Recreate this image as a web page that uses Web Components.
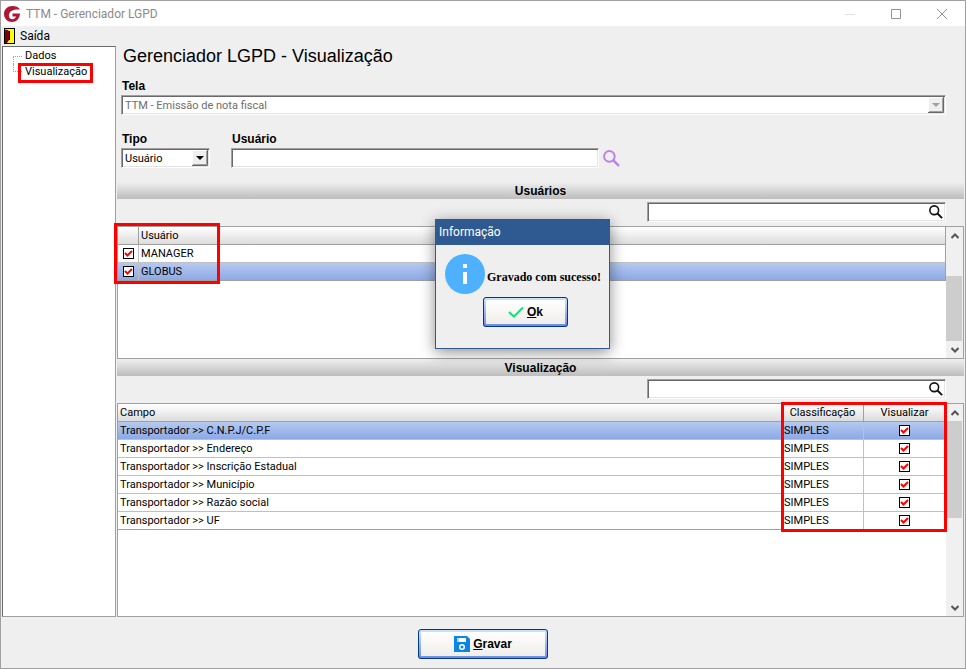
<!DOCTYPE html>
<html lang="pt-BR">
<head>
<meta charset="utf-8">
<title>TTM - Gerenciador LGPD</title>
<style>
body {
  margin: 0;
  font-family: Roboto, "Liberation Sans", sans-serif;
  font-size: 11px;
  color: #000;
  --face: #efefef;
  --line: #a0a0a0;
  --ui-font: Roboto, "Open Sans", sans-serif;
  --bold-font: "Liberation Sans", Arial, sans-serif;
}
</style>
</head>
<body>
<app-window heading="TTM - Gerenciador LGPD">
  <nav-tree slot="side"></nav-tree>
  <lgpd-form></lgpd-form>
  <section-bar>Usuários</section-bar>
  <search-row label="Pesquisar usuários"></search-row>
  <users-grid></users-grid>
  <section-bar>Visualização</section-bar>
  <search-row label="Pesquisar campos"></search-row>
  <fields-grid></fields-grid>
  <xp-button slot="footer" class="save">
    <svg slot="icon" width="16" height="16" viewBox="0 0 16 16"><path d="M0 0h13l3 3v13H0z" fill="#0c86e4"/><path d="M3 2h9v4H3z" fill="#fff"/><path d="M3 2h2v4H3z" fill="#a9d6f8"/><circle cx="8" cy="11" r="2.3" fill="none" stroke="#fff" stroke-width="1.5"/></svg>
    <u>G</u>ravar
  </xp-button>
  <message-dialog slot="dialog" heading="Informação">Gravado com sucesso!</message-dialog>
</app-window>

<script>
const glass = (color, size) => `
  <svg width="${size}" height="${size}" viewBox="0 0 16 16" fill="none" stroke="${color}">
    <circle cx="6" cy="6" r="5" stroke-width="1.8"/><path d="M9.7 9.7 15 15" stroke-width="2.2"/>
  </svg>`

// sunken boxes shared by the form and the search rows
const fieldStyle = `
  input, select {
    box-sizing: border-box;
    width: 100%;
    height: 20px;
    margin: 0;
    padding: 0 3px;
    font: inherit;
    color: inherit;
    background: #fff;
    border: 1px solid;
    border-color: #a0a0a0 #fff #fff #a0a0a0;
    border-radius: 0;
    box-shadow: inset 1px 1px #696969, inset -1px -1px #e3e3e3;
    outline: none;
    appearance: none;
  }
`

const gridStyle = `
  :host {
    display: flex;
    position: relative;
    box-sizing: border-box;
    background: #fff;
    border: 1px solid var(--line);
  }
  .sheet {
    flex: 1;
    min-width: 0;
  }
  table {
    width: 100%;
    border-collapse: separate;
    border-spacing: 0;
    table-layout: fixed;
  }
  th, td {
    box-sizing: border-box;
    height: 18px;
    padding: 0 2px;
    line-height: 17px;
    text-align: left;
    font-weight: normal;
    white-space: nowrap;
    border-right: 1px solid #c0c0c0;
    border-bottom: 1px solid #c0c0c0;
  }
  th {
    background: linear-gradient(#fff, #dcdcdc);
    border-color: var(--line);
  }
  th:last-child, td:last-child {
    border-right-color: var(--line);
  }
  tr:last-child td {
    border-bottom-color: var(--line);
  }
  tr.selected td {
    background: linear-gradient(#b5c9f0, #8ca9e6);
  }
  .center {
    text-align: center;
  }
  .check {
    padding: 0;
    text-align: center;
  }
  input {
    display: block;
    appearance: none;
    box-sizing: border-box;
    width: 11px;
    height: 11px;
    margin: 0 auto;
    background: #fff;
    border: 1px solid #000;
  }
  input:checked {
    background: #fff url("data:image/svg+xml,%3Csvg xmlns='http://www.w3.org/2000/svg' width='9' height='9'%3E%3Cpath d='M1 4l2.5 2.5L8 2' fill='none' stroke='red' stroke-width='2'/%3E%3C/svg%3E") no-repeat;
  }
`

class AppWindow extends HTMLElement{
    constructor(){
        super();
        const el = this.attachShadow({mode:'open'})
        el.innerHTML = `
        <style>
        :host {
          display: flex;
          flex-direction: column;
          position: relative;
          box-sizing: border-box;
          min-height: 100vh;
          background: var(--face);
          border: 1px solid var(--line);
        }
        .title {
          display: flex;
          align-items: center;
          height: 25px;
          padding-left: 3px;
          background: #fff;
          color: #8a8a8a;
          font: 12px/24px var(--ui-font);
        }
        .title span {
          flex: 1;
          padding-left: 5px;
        }
        .title button {
          display: flex;
          width: 46px;
          height: 24px;
          padding: 0;
          align-items: center;
          justify-content: center;
          border: 0;
          background: none;
        }
        .menu {
          display: flex;
          height: 20px;
        }
        .menu button {
          display: flex;
          align-items: center;
          gap: 5px;
          padding: 0 3px;
          border: 0;
          background: none;
          font: 12px/18px var(--ui-font);
        }
        .body {
          flex: 1;
          display: flex;
        }
        main {
          flex: 1;
          min-width: 0;
          display: flex;
          flex-direction: column;
          padding-right: 1px;
        }
        footer {
          display: flex;
          align-items: center;
          justify-content: center;
          height: 49px;
          padding-top: 2px;
        }
        </style>
        <div class="title">
          <svg width="17" height="16" viewBox="0 0 17 16"><path d="M16 3.500C14.500 1 12 0 8.500 0 3.500 0 0 3.500 0 8s3.500 8 8 8c4.500 0 7.500-3 8-8.500H8.500v3h3.500c-.7 1.800-2 2.700-3.600 2.700-2.700 0-4.200-2.400-3.200-5.400C6.200 4.600 9.500 3 16 3.500z" fill="#b01733"/></svg>
          <span>${this.getAttribute('heading')}</span>
          <button aria-label="Minimizar"><svg width="10" height="10"><path d="M0 5.500h10" stroke="#e2e2e2"/></svg></button>
          <button aria-label="Maximizar"><svg width="10" height="10"><path d="M.5.5h9v9h-9z" fill="none" stroke="#909090"/></svg></button>
          <button aria-label="Fechar"><svg width="10" height="10"><path d="M0 0l10 10M10 0L0 10" stroke="#909090"/></svg></button>
        </div>
        <nav class="menu">
          <button>
            <svg width="11" height="16" viewBox="0 0 11 16"><path d="M0 0h11v16H0z"/><path d="M2 1h8v14H2z" fill="#ff0"/><path d="M1 1h1l3 2v9l-2 3H1z" fill="#800000"/><path d="M1 1h2v1H1z" fill="#0ff"/><path d="M5.500 3v9M4 7.500h2" stroke="#000"/></svg>
            Saída
          </button>
        </nav>
        <div class="body">
          <slot name="side"></slot>
          <main><slot></slot></main>
        </div>
        <footer><slot name="footer"></slot></footer>
        <slot name="dialog"></slot>
        `
    }
}
customElements.define('app-window', AppWindow)

class NavTree extends HTMLElement{
    constructor(){
        super();
        const el = this.attachShadow({mode:'open'})
        el.innerHTML = `
        <style>
        :host {
          flex: 0 0 114px;
          box-sizing: border-box;
          margin: 0 1px;
          background: #fff;
          border: 1px solid var(--line);
          border-top-color: #696969;
          border-left-color: #696969;
        }
        ul {
          margin: 1px 0 0 10px;
          padding: 0;
          list-style: none;
        }
        li {
          display: flex;
          height: 16px;
          line-height: 16px;
        }
        li::before {
          content: "";
          width: 9px;
          height: 8px;
          box-sizing: border-box;
          border-left: 1px dotted #a0a0a0;
          border-bottom: 1px dotted #a0a0a0;
        }
        li:first-child::before {
          margin-top: 8px;
          border-top: 1px dotted #a0a0a0;
          border-bottom: 0;
        }
        a {
          position: relative;
          padding-left: 3px;
          color: inherit;
          text-decoration: none;
        }
        .current::after {
          content: "";
          position: absolute;
          inset: -1px -6px -3px -4px;
          border: 3px solid #f00;
        }
        </style>
        <ul>
          <li><a href="#dados">Dados</a></li>
          <li><a class="current" href="#visualizacao">Visualização</a></li>
        </ul>
        `
    }
}
customElements.define('nav-tree', NavTree)

class LgpdForm extends HTMLElement{
    constructor(){
        super();
        const el = this.attachShadow({mode:'open'})
        el.innerHTML = `
        <style>
        ${fieldStyle}
        :host {
          display: block;
          padding: 0 18px 14px 4px;
        }
        h1 {
          margin: 0 0 12px 2px;
          font: 18px/20px var(--bold-font);
        }
        label {
          display: block;
          margin-bottom: 1px;
          padding-left: 1px;
          font: bold 12px/16px var(--bold-font);
        }
        .combo {
          display: grid;
          align-items: center;
        }
        .combo > * {
          grid-area: 1 / 1;
        }
        .combo svg {
          justify-self: end;
          margin-right: 2px;
          pointer-events: none;
        }
        select:disabled {
          color: #6d6d6d;
          opacity: 1;
        }
        .row {
          display: flex;
          align-items: flex-end;
          margin-top: 16px;
        }
        .tipo {
          width: 89px;
          margin-right: 21px;
        }
        .usuario {
          width: 44.6%;
          margin-right: 4px;
        }
        button {
          display: flex;
          padding: 0 0 1px;
          border: 0;
          background: none;
        }
        </style>
        <h1>Gerenciador LGPD - Visualização</h1>
        <label for="tela">Tela</label>
        <div class="combo">
          <select id="tela" disabled><option>TTM - Emissão de nota fiscal</option></select>
          <svg width="16" height="16"><path d="M0 0h16v16H0z" fill="#efefef"/><path d="M15.500 0v15.500H0" fill="none" stroke="#696969"/><path d="M14.500 1v13.500H1" fill="none" stroke="#a0a0a0"/><path d="M.5 15V.5H15" fill="none" stroke="#fff"/><path d="M4 6h8l-4 4z" fill="#a0a0a0"/></svg>
        </div>
        <div class="row">
          <div class="tipo">
            <label for="tipo">Tipo</label>
            <div class="combo">
              <select id="tipo"><option>Usuário</option></select>
              <svg width="16" height="16"><path d="M0 0h16v16H0z" fill="#efefef"/><path d="M15.500 0v15.500H0" fill="none" stroke="#696969"/><path d="M14.500 1v13.500H1" fill="none" stroke="#a0a0a0"/><path d="M.5 15V.5H15" fill="none" stroke="#fff"/><path d="M4 6h8l-4 4z"/></svg>
            </div>
          </div>
          <div class="usuario">
            <label for="usuario">Usuário</label>
            <input id="usuario" type="text">
          </div>
          <button aria-label="Buscar usuário">${glass('#bb80ea', 17)}</button>
        </div>
        `
    }
}
customElements.define('lgpd-form', LgpdForm)

class SectionBar extends HTMLElement{
    constructor(){
        super();
        const el = this.attachShadow({mode:'open'})
        el.innerHTML = `
        <style>
        :host {
          display: block;
          height: 17px;
          background: linear-gradient(#efefef, #bdbdbd);
          text-align: center;
          font: bold 12px/18px var(--bold-font);
        }
        </style>
        <slot></slot>
        `
    }
}
customElements.define('section-bar', SectionBar)

class SearchRow extends HTMLElement{
    constructor(){
        super();
        const el = this.attachShadow({mode:'open'})
        el.innerHTML = `
        <style>
        ${fieldStyle}
        :host {
          display: flex;
          justify-content: flex-end;
          padding: 3px 18px 4px 0;
        }
        div {
          display: grid;
          align-items: center;
          width: 299px;
        }
        div > * {
          grid-area: 1 / 1;
        }
        button {
          display: flex;
          justify-self: end;
          margin-right: 3px;
          padding: 0;
          border: 0;
          background: none;
        }
        </style>
        <div>
          <input type="text" aria-label="${this.getAttribute('label')}">
          <button aria-label="Pesquisar">${glass('#111', 14)}</button>
        </div>
        `
    }
}
customElements.define('search-row', SearchRow)

class ScrollBar extends HTMLElement{
    constructor(){
        super();
        const el = this.attachShadow({mode:'open'})
        el.innerHTML = `
        <style>
        :host {
          flex: 0 0 17px;
          display: flex;
          flex-direction: column;
          background: #f0f0f0;
        }
        button {
          display: flex;
          align-items: center;
          justify-content: center;
          height: 17px;
          padding: 0;
          border: 0;
          background: none;
        }
        .track {
          flex: 1;
          display: flex;
          flex-direction: column;
          justify-content: ${this.getAttribute('at')};
        }
        .thumb {
          height: ${this.getAttribute('size')};
          margin-right: 1px;
          background: #cdcdcd;
        }
        </style>
        <button aria-label="Acima"><svg width="8" height="6"><path d="M.5 5 4 1.500 7.500 5" fill="none" stroke="#555" stroke-width="2"/></svg></button>
        <div class="track"><div class="thumb"></div></div>
        <button aria-label="Abaixo"><svg width="8" height="6"><path d="M.5 1 4 4.500 7.500 1" fill="none" stroke="#555" stroke-width="2"/></svg></button>
        `
    }
}
customElements.define('scroll-bar', ScrollBar)

// red frame laid over part of a grid
class RedFrame extends HTMLElement{
    constructor(){
        super();
        const el = this.attachShadow({mode:'open'})
        el.innerHTML = `
        <style>
        :host {
          display: block;
          position: absolute;
          box-sizing: border-box;
          border: 3px solid #f00;
          pointer-events: none;
        }
        </style>
        `
    }
}
customElements.define('red-frame', RedFrame)

class UsersGrid extends HTMLElement{
    constructor(){
        super();
        const el = this.attachShadow({mode:'open'})
        const rows = ['MANAGER', 'GLOBUS'].map((name, i) => `
          <tr class="${i == 1 ? 'selected' : ''}">
            <td class="check"><input type="checkbox" aria-label="${name}" checked></td>
            <td>${name}</td>
          </tr>`).join('')
        el.innerHTML = `
        <style>
        ${gridStyle}
        :host {
          height: 133px;
        }
        .mark {
          width: 21px;
        }
        red-frame {
          top: -4px;
          left: -4px;
          width: 106px;
          height: 61px;
        }
        </style>
        <div class="sheet">
          <table>
            <colgroup><col class="mark"><col></colgroup>
            <thead><tr><th></th><th>Usuário</th></tr></thead>
            <tbody>${rows}</tbody>
          </table>
        </div>
        <scroll-bar at="flex-end" size="65px"></scroll-bar>
        <red-frame></red-frame>
        `
    }
}
customElements.define('users-grid', UsersGrid)

class FieldsGrid extends HTMLElement{
    constructor(){
        super();
        const el = this.attachShadow({mode:'open'})
        const fields = ['C.N.P.J/C.P.F', 'Endereço', 'Inscrição Estadual', 'Município', 'Razão social', 'UF']
        const rows = fields.map((name, i) => `
          <tr class="${i == 0 ? 'selected' : ''}">
            <td>Transportador &gt;&gt; ${name}</td>
            <td>SIMPLES</td>
            <td class="check"><input type="checkbox" aria-label="${name}" checked></td>
          </tr>`).join('')
        el.innerHTML = `
        <style>
        ${gridStyle}
        :host {
          flex: 1;
        }
        .class, .view {
          width: 82px;
        }
        red-frame {
          top: -2px;
          right: 16px;
          width: 166px;
          height: 130px;
        }
        </style>
        <div class="sheet">
          <table>
            <colgroup><col><col class="class"><col class="view"></colgroup>
            <thead><tr><th>Campo</th><th class="center">Classificação</th><th class="center">Visualizar</th></tr></thead>
            <tbody>${rows}</tbody>
          </table>
        </div>
        <scroll-bar at="flex-start" size="97px"></scroll-bar>
        <red-frame></red-frame>
        `
    }
}
customElements.define('fields-grid', FieldsGrid)

class XpButton extends HTMLElement{
    constructor(){
        super();
        const el = this.attachShadow({mode:'open'})
        el.innerHTML = `
        <style>
        :host {
          display: block;
          width: 85px;
        }
        :host(.save) {
          width: 130px;
        }
        button {
          display: flex;
          align-items: center;
          justify-content: center;
          gap: 3px;
          box-sizing: border-box;
          width: 100%;
          height: 30px;
          padding: 0;
          color: #000;
          font: bold 12px var(--bold-font);
          background:
            linear-gradient(#fff, #f0eeea) padding-box,
            linear-gradient(#cfe6fd, #6f86ee) border-box;
          border: 3px solid transparent;
          border-radius: 3px;
          outline: 1px solid #003c74;
          outline-offset: -1px;
        }
        </style>
        <button><slot name="icon"></slot><span><slot></slot></span></button>
        `
    }
}
customElements.define('xp-button', XpButton)

class MessageDialog extends HTMLElement{
    constructor(){
        super();
        const el = this.attachShadow({mode:'open'})
        el.innerHTML = `
        <style>
        :host {
          display: block;
          position: absolute;
          top: 218px;
          left: 434px;
          box-sizing: border-box;
          width: 175px;
          height: 130px;
          background: var(--face);
          border: 1px solid #2f5a91;
          box-shadow: 0 3px 14px rgba(0, 0, 0, .45);
        }
        header {
          height: 25px;
          padding-left: 3px;
          color: #fff;
          background: #2f5a91;
          font: 12px/24px var(--ui-font);
        }
        .message {
          display: flex;
          align-items: center;
          gap: 2px;
          margin: 9px 0 3px 9px;
          font: bold 12px "Liberation Serif", "Times New Roman", serif;
          white-space: nowrap;
        }
        .message span {
          padding-top: 6px;
        }
        xp-button {
          margin: 0 auto 0 47px;
        }
        </style>
        <header>${this.getAttribute('heading')}</header>
        <div class="message">
          <svg width="40" height="40"><circle cx="20" cy="20" r="20" fill="#4db1ff"/><path d="M18 10h4v4h-4zM18 18h4v12h-4z" fill="#fff"/></svg>
          <span><slot></slot></span>
        </div>
        <xp-button>
          <svg slot="icon" width="16" height="12"><path d="M1 6l5 4.500L15 1.500" fill="none" stroke="#0be27c" stroke-width="2"/></svg>
          <u>O</u>k
        </xp-button>
        `
    }
}
customElements.define('message-dialog', MessageDialog)
</script>
</body>
</html>
